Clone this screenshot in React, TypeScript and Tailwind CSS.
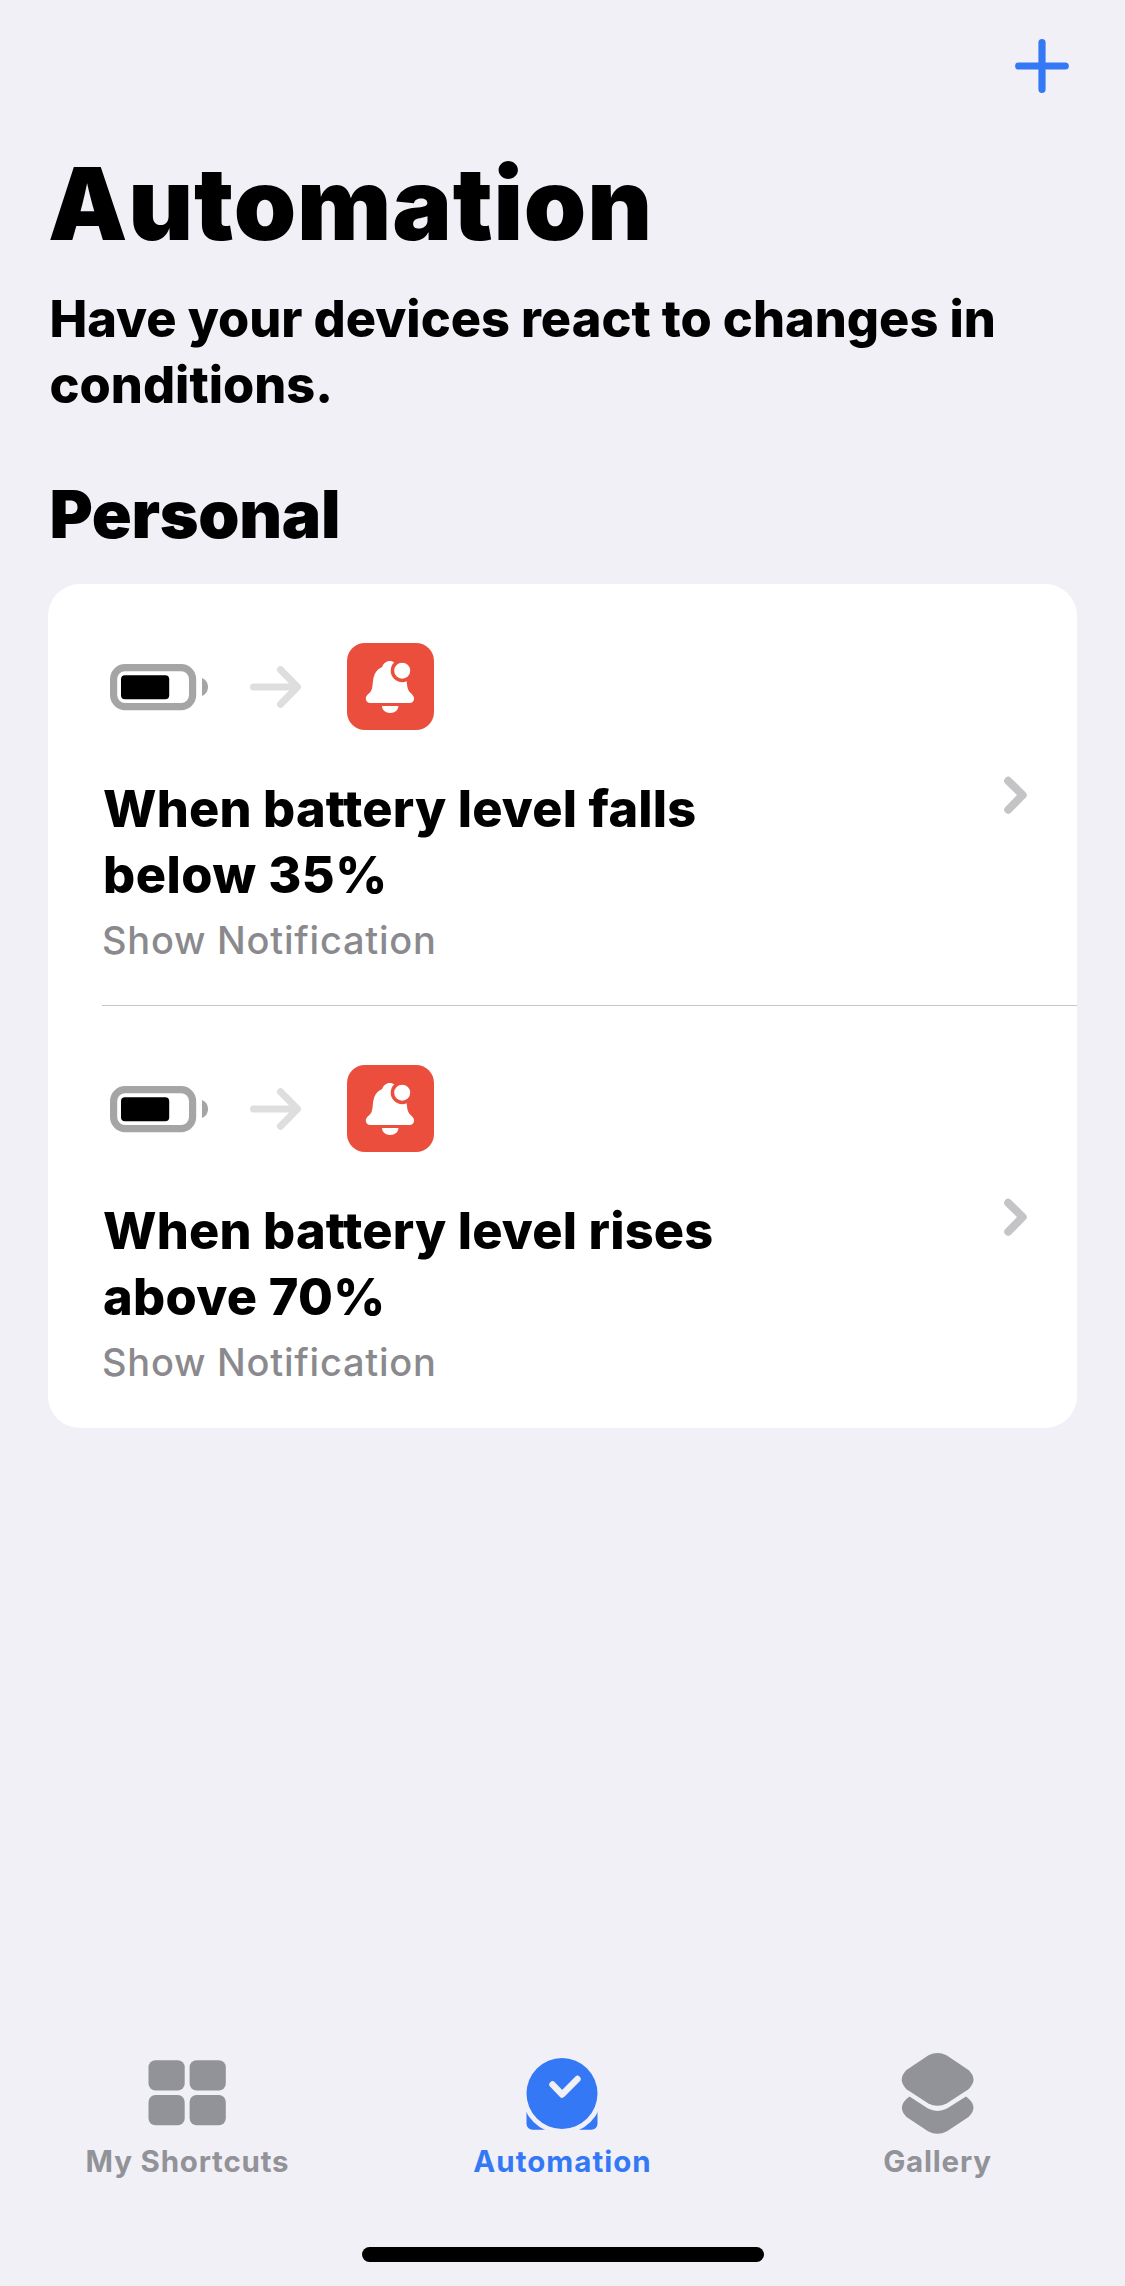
import React from "react";

const automations = [
  { lines: ["When battery level falls", "below 35%"], spacing: ["tracking-[0.2px]", "tracking-[0.5px]"], action: "Show Notification" },
  { lines: ["When battery level rises", "above 70%"], spacing: ["tracking-[0.2px]", "tracking-[0.3px]"], action: "Show Notification" },
];

function PlusIcon() {
  return (
    <svg width="56" height="56" viewBox="0 0 56 56" fill="none" stroke="#3478f6" strokeWidth="7.2" strokeLinecap="round">
      <path d="M28 4.7v46.6M4.7 28h46.6" />
    </svg>
  );
}

function BatteryIcon() {
  return (
    <svg width="100" height="48" viewBox="0 0 100 48">
      <rect x="3.6" y="4.6" width="79" height="39" rx="11.5" fill="none" stroke="#a5a5a5" strokeWidth="7.2" />
      <rect x="11" y="12.2" width="48.2" height="24" rx="4" fill="#000" />
      <path d="M92 15c3.800 1.600 6 5 6 9s-2.200 7.400-6 9z" fill="#a5a5a5" />
    </svg>
  );
}

function ArrowIcon() {
  return (
    <svg width="52" height="44" viewBox="0 0 52 44" fill="none" stroke="#dedede" strokeWidth="7" strokeLinecap="round" strokeLinejoin="round">
      <path d="M3.500 22H46M30.500 4.800l17 17.200-17 17.200" />
    </svg>
  );
}

function BellIcon() {
  return (
    <svg width="87" height="87" viewBox="0 0 87 87">
      <path
        fill="#fff"
        d="M23.500 60c-2.900 0-4.700-1.900-4.700-4.500 0-3.500 4-5 5.600-8.300 1.900-4 .8-10.500 3.400-16.200 1.500-3.300 4.100-5.700 7.400-7 1.100-3.600 4-6 7.600-6 3.700 0 6.700 2.300 7.800 6 3.100 1.300 5.600 3.500 7.200 6.700 2.600 5.500 1.600 12.300 3.700 16.500 1.700 3.200 5.600 4.800 5.600 8.300 0 2.600-1.800 4.500-4.700 4.500z"
      />
      <path fill="#fff" d="M35 63h16.400c0 4-3.500 7-8.200 7S35 67 35 63z" />
      <circle cx="55.200" cy="27.700" r="11.500" fill="#eb4e3d" />
      <circle cx="55.200" cy="27.700" r="8" fill="#fff" />
    </svg>
  );
}

function ChevronIcon() {
  return (
    <svg width="25" height="40" viewBox="0 0 25 40" fill="none" stroke="#c4c4c6" strokeWidth="8" strokeLinecap="round" strokeLinejoin="round">
      <path d="M5.200 5.800 19.700 20 5.200 34.700" />
    </svg>
  );
}

function GridIcon() {
  return (
    <svg width="100" height="100" viewBox="0 0 100 100" fill="#929299">
      <rect x="10.500" y="20.300" width="36.200" height="30.200" rx="7" />
      <rect x="51.600" y="20.300" width="36.200" height="30.200" rx="7" />
      <rect x="10.500" y="55" width="36.200" height="30.200" rx="7" />
      <rect x="51.600" y="55" width="36.200" height="30.200" rx="7" />
    </svg>
  );
}

function ClockIcon() {
  return (
    <svg width="100" height="100" viewBox="0 0 100 100">
      <path d="M13.500 60h71v23.700a6 6 0 0 1-6 6h-59a6 6 0 0 1-6-6z" fill="#3478f6" />
      <circle cx="49" cy="53.500" r="40.300" fill="#f1f0f6" />
      <circle cx="49" cy="53.500" r="35.500" fill="#3478f6" />
      <path d="M39.500 44.500 49.100 54.500 64.500 39" fill="none" stroke="#f1f0f6" strokeWidth="6.400" strokeLinecap="round" strokeLinejoin="round" />
    </svg>
  );
}

function LayersIcon() {
  return (
    <svg width="100" height="100" viewBox="0 0 100 100" fill="#929299">
      <path d="M40.500 15.300q9-4.800 18 0L80.500 30q10 9.500 0 19.200L59 63.200q-9.500 5-19 0L18.500 49.200q-9.500-9.700 0-19.200z" />
      <path d="M21.500 56.500 40 68.500q9.500 4.800 19 0L78 56.500q13.500 10 2.500 20.500L59 91.200q-9.500 5-19 0L18.500 77q-10.500-10.500 3-20.500z" />
    </svg>
  );
}

export default function App() {
  return (
    <div className="flex h-[2286px] w-[1125px] flex-col overflow-hidden bg-[#f1f0f6] font-['Inter',sans-serif] text-black">
      <header className="flex h-[144px] justify-end pt-[38px] pr-[55px]">
        <button className="size-[56px]" aria-label="Add automation"><PlusIcon /></button>
      </header>

      <main className="px-12">
        <h1 className="h-[120px] whitespace-nowrap text-[100px] leading-[120px] font-black tracking-[0.800px]">
          <span>Automation</span>
        </h1>
        <p className="mt-[22px] pl-[1.500px] text-[50.500px] leading-[66px] font-extrabold whitespace-nowrap">
          <span>Have your devices react to changes in</span>
          <br />
          <span>conditions.</span>
        </p>
        <h2 className="mt-14 pl-[1.500px] text-[66px] leading-[80px] font-black tracking-[-0.3px]"><span>Personal</span></h2>

        <section className="mt-[30px] overflow-hidden rounded-[32px] bg-white">
          {automations.map((item, i) => (
            <article key={item.lines[0]} className="flex h-[422px] flex-col pl-[54px]">
              <div className={i === 0 ? "flex h-[422px] border-b border-[#c6c6c8]" : "flex h-[422px]"}>
                <div className="flex-1 pt-[59px]">
                  <div className="flex h-[87px] items-center">
                    <div className="ml-2 w-[100px]"><BatteryIcon /></div>
                    <div className="ml-10 w-[52px]"><ArrowIcon /></div>
                    <div className="ml-[45px] size-[87px] rounded-[18px] bg-[#eb4e3d]"><BellIcon /></div>
                  </div>
                  <h3 className="mt-[46px] pl-px text-[50.500px] leading-[66px] font-extrabold whitespace-nowrap">
                    <span className={item.spacing[0]}>{item.lines[0]}</span>
                    <br />
                    <span className={item.spacing[1]}>{item.lines[1]}</span>
                  </h3>
                  <p className="mt-[7px] text-[38px] leading-[50px] font-medium tracking-[0.75px] text-[#8a8a8e]"><span>{item.action}</span></p>
                </div>
                <div className="flex w-[74px] items-center"><ChevronIcon /></div>
              </div>
            </article>
          ))}
        </section>
      </main>

      <nav className="mt-auto grid h-[207px] grid-cols-3 text-[29.500px] leading-10 font-bold text-[#929299]">
        <div className="flex flex-col items-center">
          <GridIcon />
          <span className="mt-[1px] h-10 tracking-[0.800px]">My Shortcuts</span>
        </div>
        <div className="flex flex-col items-center text-[#3478f6]">
          <ClockIcon />
          <span className="mt-[1px] h-10 tracking-[1px]">Automation</span>
        </div>
        <div className="flex flex-col items-center">
          <LayersIcon />
          <span className="mt-[1px] h-10 tracking-[0.800px]">Gallery</span>
        </div>
      </nav>
      <div className="mb-6 ml-[362px] h-[15px] w-[402px] rounded-full bg-black" />
    </div>
  );
}
